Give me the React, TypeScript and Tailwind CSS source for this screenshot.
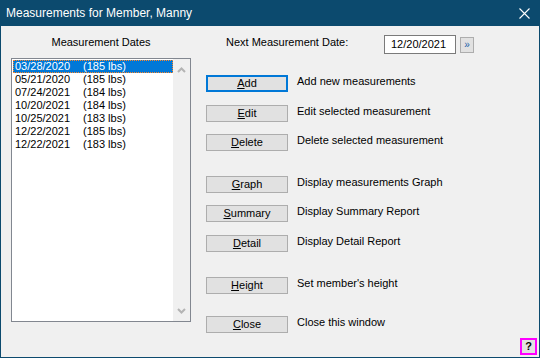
import React from 'react';

const dates = [
  ['03/28/2020', '(185 lbs)'],
  ['05/21/2020', '(185 lbs)'],
  ['07/24/2021', '(184 lbs)'],
  ['10/20/2021', '(184 lbs)'],
  ['10/25/2021', '(183 lbs)'],
  ['12/22/2021', '(185 lbs)'],
  ['12/22/2021', '(183 lbs)'],
];

function Btn({ hot, rest, desc, className = '', primary = false }: { hot: string; rest: string; desc: string; className?: string; primary?: boolean }) {
  return (
    <div className={`flex items-start ${className}`}>
      <button
        className={`w-[82px] h-[17px] bg-[#e1e1e1] text-[11px] leading-[13px] text-black flex items-center justify-center ${
          primary ? 'border-2 border-[#0078d7]' : 'border border-[#adadad]'
        }`}
      >
        <span>
          <span className="underline underline-offset-[1px]">{hot}</span>
          {rest}
        </span>
      </button>
      <span className="ml-[9px] -mt-[1px] text-[11px] leading-[14px] text-black">{desc}</span>
    </div>
  );
}

function Chevron({ up }: { up?: boolean }) {
  return (
    <svg width="9" height="6" viewBox="0 0 9 6">
      <polyline
        points={up ? '1,5 4.5,1.5 8,5' : '1,1 4.5,4.5 8,1'}
        fill="none"
        stroke="#b4b4b4"
        strokeWidth="2"
      />
    </svg>
  );
}

export default function App() {
  return (
    <div className="w-[540px] h-[358px] flex flex-col bg-[#f0f0f0] border-x border-b border-[#0c4a6e] font-['Liberation_Sans',Arial,sans-serif] text-black overflow-hidden">
      {/* title bar */}
      <div className="h-[26px] -mx-px bg-[#0c4a6e] flex items-center justify-between pl-[6px] pr-[10px] shrink-0">
        <span className="text-white text-[12px] leading-[14px]">Measurements for Member, Manny</span>
        <svg width="11" height="11" viewBox="0 0 11 11">
          <path d="M0.5 0.5 L10.5 10.5 M10.5 0.5 L0.5 10.5" stroke="#fff" strokeWidth="1.1" />
        </svg>
      </div>

      {/* header row */}
      <div className="h-[32px] flex items-start pt-[9px] shrink-0">
        <div className="ml-[10px] w-[180px] text-center text-[11px] leading-[14px]">Measurement Dates</div>
        <div className="ml-[35px] w-[158px] text-[11px] leading-[14px]">Next Measurement Date:</div>
        <div className="w-[72px] h-[19px] border border-[#7a7a7a] bg-white text-[11px] leading-[17px] pl-[6px]">12/20/2021</div>
        <button className="ml-[4px] mt-[2px] w-[14px] h-[16px] bg-[#e1e1e1] border border-[#adadad] text-[10px] leading-[12px] text-[#1a5fa8] flex items-center justify-center">
          »
        </button>
      </div>

      {/* main row */}
      <div className="flex items-start shrink-0">
        <div className="ml-[10px] w-[180px] h-[264px] border border-[#828790] bg-white flex">
          <div className="w-[161px] pl-[1px] pt-[1px]">
            {dates.map(([d, w], i) => (
              <div
                key={i}
                className={`h-[13px] flex items-center text-[11px] leading-[13px] pl-[1px] ${
                  i === 0 ? 'bg-[#0078d7] text-white border border-dotted border-[#ff8728]' : 'border border-transparent'
                }`}
              >
                <span className="w-[68px]">{d}</span>
                <span>{w}</span>
              </div>
            ))}
          </div>
          <div className="w-[17px] bg-[#f0f0f0] flex flex-col items-center justify-between pt-[8px] pb-[7px]">
            <Chevron up />
            <Chevron />
          </div>
        </div>

        <div className="ml-[15px] pt-[17px] flex flex-col">
          <Btn primary hot="A" rest="dd" desc="Add new measurements" />
          <Btn hot="E" rest="dit" desc="Edit selected measurement" className="mt-[13px]" />
          <Btn hot="D" rest="elete" desc="Delete selected measurement" className="mt-[12px]" />
          <Btn hot="G" rest="raph" desc="Display measurements Graph" className="mt-[25px]" />
          <Btn hot="S" rest="ummary" desc="Display Summary Report" className="mt-[12px]" />
          <Btn hot="D" rest="etail" desc="Display Detail Report" className="mt-[13px]" />
          <Btn hot="H" rest="eight" desc="Set member's height" className="mt-[25px]" />
          <Btn hot="C" rest="lose" desc="Close this window" className="mt-[22px]" />
        </div>
      </div>

      {/* help */}
      <div className="flex justify-end mt-[5px] pr-[2px]">
        <button className="w-[17px] h-[17px] border-2 border-[#ff00ff] bg-[#e1e1e1] text-[11px] leading-[13px] font-bold text-black flex items-center justify-center">
          ?
        </button>
      </div>
    </div>
  );
}
